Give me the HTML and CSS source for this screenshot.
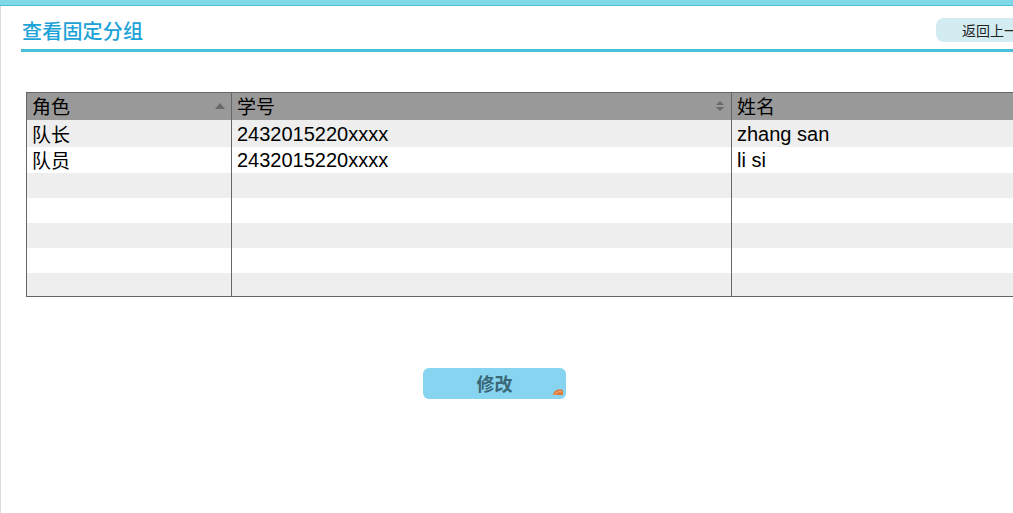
FILE: index.html
```html
<!DOCTYPE html>
<html lang="zh">
<head>
<meta charset="utf-8">
<link rel="stylesheet" href="styles.css">
</head>
<body>
<div class="topbar"></div>
<div class="page">
  <div class="head">
    <h1 class="title">查看固定分组</h1>
    <button class="back">返回上一</button>
  </div>
  <div class="grid-wrap">
    <table class="grid">
      <colgroup><col class="c1"><col class="c2"><col class="c3"></colgroup>
      <thead>
        <tr>
          <th><span>角色</span><i class="sort up"></i></th>
          <th><span>学号</span><i class="sort both"></i></th>
          <th><span>姓名</span></th>
        </tr>
      </thead>
      <tbody>
        <tr class="odd t"><td>队长</td><td>2432015220xxxx</td><td>zhang san</td></tr>
        <tr class="even t"><td>队员</td><td>2432015220xxxx</td><td>li si</td></tr>
        <tr class="odd"><td></td><td></td><td></td></tr>
        <tr class="even"><td></td><td></td><td></td></tr>
        <tr class="odd"><td></td><td></td><td></td></tr>
        <tr class="even"><td></td><td></td><td></td></tr>
        <tr class="odd last"><td></td><td></td><td></td></tr>
      </tbody>
    </table>
  </div>
  <div class="actions">
    <button class="edit">修改<svg class="mark" width="12" height="10" viewBox="0 0 12 10"><path d="M1 9 C2 4 6 2 11 4 L11 9 Z" fill="#e07a3c"/><path d="M3 9 C4 6 7 5 10 6" stroke="#f4b08a" stroke-width="1" fill="none"/></svg></button>
  </div>
</div>
</body>
</html>
```
FILE: styles.css
```css
html, body {
  margin: 0;
  padding: 0;
  background: #fff;
  overflow: hidden;
  width: 1013px;
  height: 513px;
}
body {
  font-family: "Liberation Sans", "Noto Sans CJK SC", sans-serif;
  color: #000;
}
.topbar {
  height: 5px;
  background: #7ed8e8;
  border-bottom: 1px solid #4dbfd6;
}
.page {
  border-left: 1px solid #dcdcdc;
  height: 507px;
  width: 1013px;
  box-sizing: border-box;
  padding-left: 20px;
  overflow: hidden;
}
.head {
  display: flex;
  align-items: flex-start;
  justify-content: space-between;
  border-bottom: 3px solid #45c0d8;
  height: 46px;
  box-sizing: border-box;
  width: 1080px;
}
.title {
  margin: 13px 0 0 1px;
  font-family: "Noto Sans CJK SC", sans-serif;
  font-weight: 500;
  font-size: 20px;
  line-height: 24px;
  color: #1ba2d6;
  letter-spacing: 0.2px;
}
.back {
  margin-top: 12px;
  margin-right: 0;
  width: 165px;
  height: 24px;
  border: none;
  border-radius: 8px;
  background: #d3ecf2;
  font-family: "Noto Sans CJK SC", sans-serif;
  font-size: 14px;
  color: #222;
  text-align: left;
  padding: 0 0 0 26px;
  line-height: 24px;
  flex: none;
}
.grid-wrap {
  padding-top: 40px;
  padding-left: 5px;
}
.grid {
  border-collapse: collapse;
  table-layout: fixed;
  width: 1060px;
  border-top: 1px solid #666;
  border-left: 1px solid #666;
  border-bottom: 1px solid #666;
}
.c1 { width: 205px; }
.c2 { width: 500px; }
.grid th, .grid td {
  padding: 0 0 0 5px;
  border-right: 1px solid #666;
  font-size: 20px;
  font-weight: normal;
  text-align: left;
  white-space: nowrap;
  overflow: hidden;
}
.grid th {
  height: 26px;
  background: #999;
  position: relative;
  line-height: 26px;
}
.grid th span { font-family: "Noto Sans CJK SC", sans-serif; font-size: 19px; }
.grid td { height: 25px; line-height: 25px; }
.grid tr.t td { height: 26px; line-height: 26px; }
.grid tr.t:first-child td { height: 27px; }
.grid td:first-child { font-family: "Noto Sans CJK SC", sans-serif; font-size: 19px; }
.grid tr.last td { height: 23px; }
.odd td { background: #eee; }
.even td { background: #fff; }
.sort {
  position: absolute;
  right: 6px;
  top: 10px;
  width: 0;
  height: 0;
}
.sort.up {
  border-left: 5px solid transparent;
  border-right: 5px solid transparent;
  border-bottom: 6px solid #6a6a6a;
}
.sort.both {
  top: 8px;
  right: 7px;
  border-left: 4px solid transparent;
  border-right: 4px solid transparent;
  border-bottom: 4px solid #6a6a6a;
}
.sort.both::after {
  content: "";
  position: absolute;
  left: -4px;
  top: 6px;
  border-left: 4px solid transparent;
  border-right: 4px solid transparent;
  border-top: 4px solid #6a6a6a;
}
.actions {
  padding-top: 71px;
  padding-left: 402px;
}
.edit {
  position: relative;
  width: 143px;
  height: 31px;
  border: none;
  border-radius: 6px;
  background: #87d4f0;
  color: #3a6878;
  font-family: "Noto Sans CJK SC", sans-serif;
  font-weight: bold;
  font-size: 18px;
  line-height: 31px;
  padding: 0;
  text-align: center;
}
.mark {
  position: absolute;
  right: 2px;
  bottom: 3px;
}
```
